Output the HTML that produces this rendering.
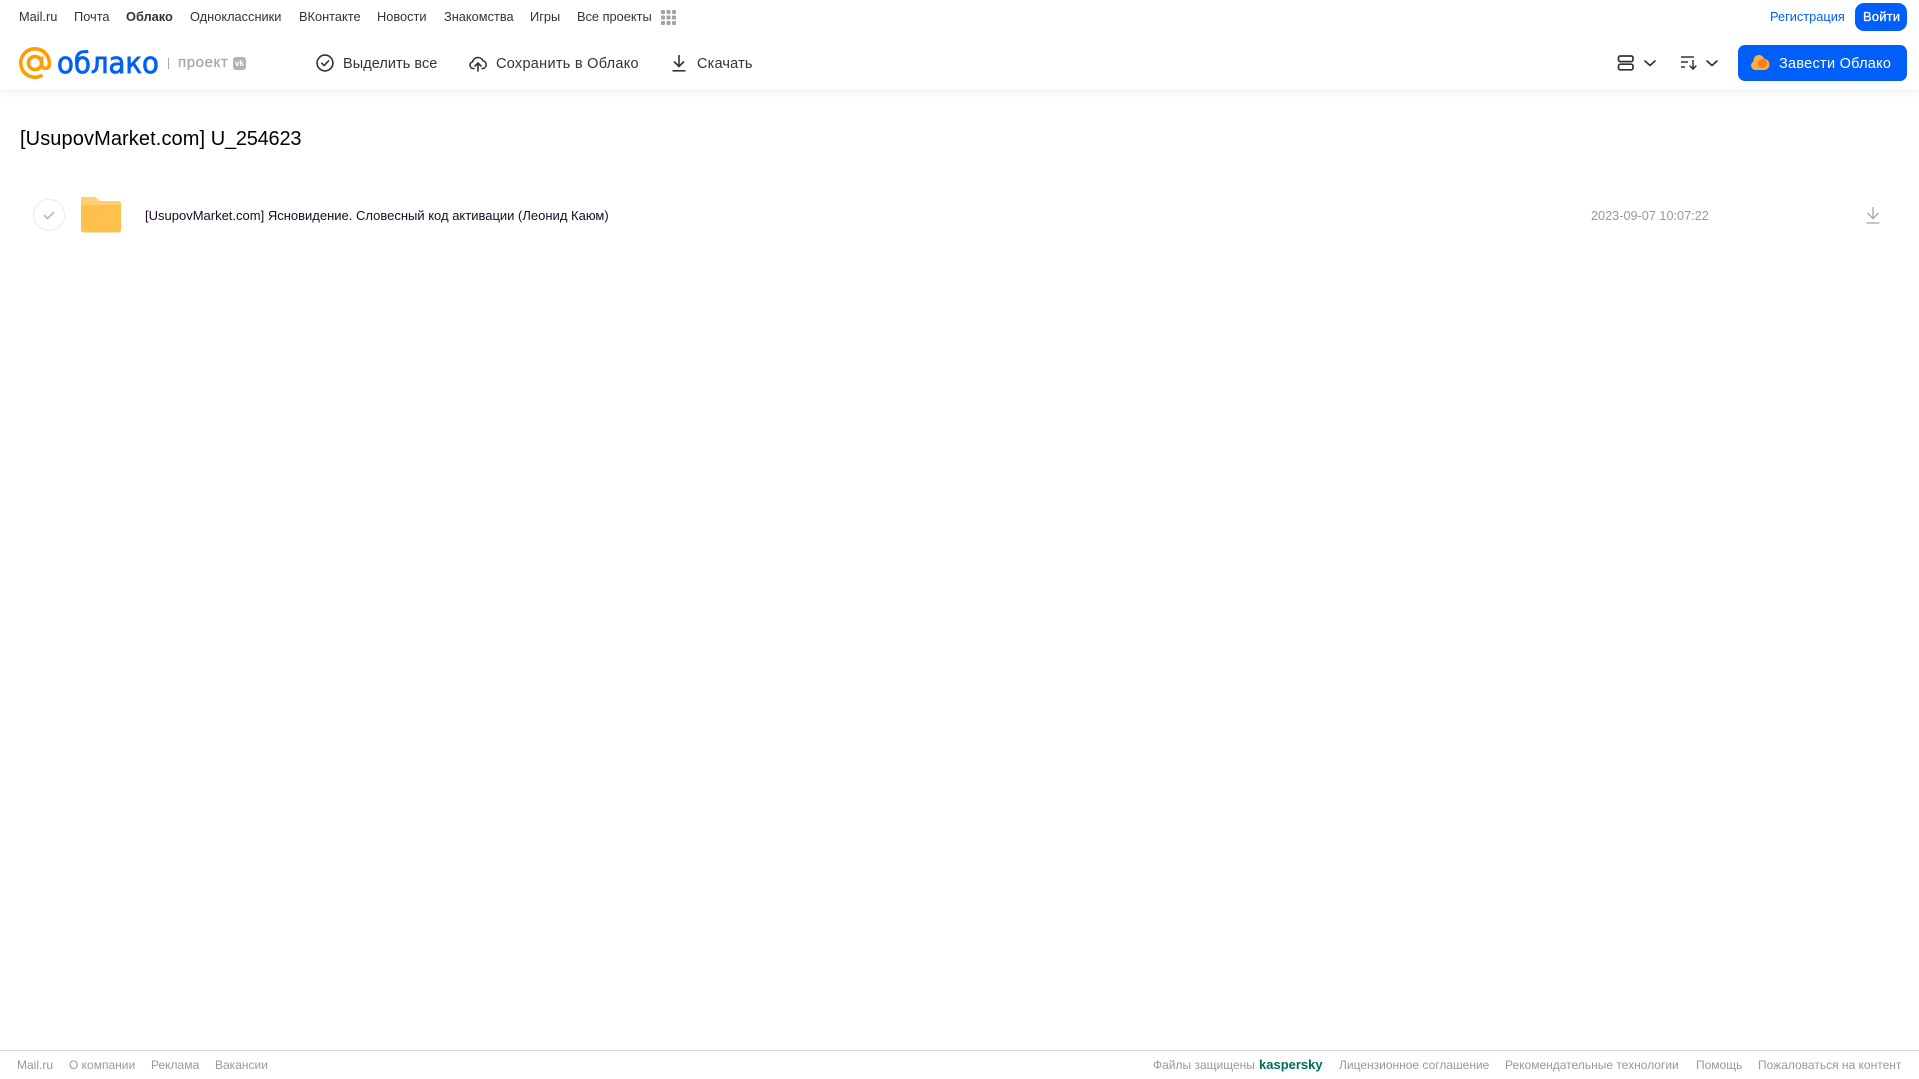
<!DOCTYPE html>
<html lang="ru"><head><meta charset="utf-8"><title>Облако</title>
<style>
html,body{margin:0;padding:0;background:#fff;width:1919px;height:1079px;overflow:hidden}
body{font-family:"Liberation Sans",Arial,sans-serif;position:relative}
.t{position:absolute;white-space:nowrap;line-height:20px;height:20px}
.n{font-size:12.8px;color:#333;top:7px}
.b{font-size:14.5px;color:#333;top:54px}
.f{font-size:12px;color:#999;top:1055px}
svg{position:absolute;overflow:visible}
</style></head><body>
<div style="position:absolute;left:0;top:0;width:1919px;height:90px;background:#fff;box-shadow:0 2px 8px rgba(0,0,0,.07)"></div>

<div class="t n" style="left:19px">Mail.ru</div>
<div class="t n" style="left:74px">Почта</div>
<div class="t n" style="left:126px;font-weight:bold">Облако</div>
<div class="t n" style="left:190px">Одноклассники</div>
<div class="t n" style="left:299px">ВКонтакте</div>
<div class="t n" style="left:377px">Новости</div>
<div class="t n" style="left:444px">Знакомства</div>
<div class="t n" style="left:530px">Игры</div>
<div class="t n" style="left:577px">Все проекты</div>
<svg style="left:661px;top:10px" width="15" height="15" fill="#a3a3a3"><rect width="4" height="4" rx="1"/><rect x="5.5" width="4" height="4" rx="1"/><rect x="11" width="4" height="4" rx="1"/><rect y="5.500" width="4" height="4" rx="1"/><rect x="5.500" y="5.500" width="4" height="4" rx="1"/><rect x="11" y="5.500" width="4" height="4" rx="1"/><rect y="11" width="4" height="4" rx="1"/><rect x="5.500" y="11" width="4" height="4" rx="1"/><rect x="11" y="11" width="4" height="4" rx="1"/></svg>

<div class="t n" style="left:1770px;color:#005ff9">Регистрация</div>
<div style="position:absolute;left:1855px;top:3px;width:52px;height:28px;border-radius:9px;background:#005ff9"></div>
<div class="t n" style="left:1863px;color:#fff;top:7px;font-size:13px;letter-spacing:.15px;-webkit-text-stroke:.3px #fff">Войти</div>

<svg style="left:19px;top:47px" width="32" height="32" viewBox="0 0 32 32" fill="none" stroke="#ff9e00" stroke-width="3.6"><circle cx="16" cy="16" r="6.600"/><path d="M22.600 9.500V17.500a3.900 3.900 0 0 0 7.600 1.200C31.500 10 25 1.800 16 1.800A14.200 14.200 0 1 0 23.500 28"/></svg>
<div class="t" style="left:57px;top:45px;height:36px;line-height:36px;font-size:29px;color:#005ff9;-webkit-text-stroke:.8px #005ff9;font-family:'DejaVu Sans',sans-serif;transform-origin:0 50%;transform:scaleX(.95)">облако</div>
<div style="position:absolute;left:168px;top:58px;width:1px;height:11px;background:#aaa"></div>
<div class="t" style="left:178px;top:53px;font-size:15px;color:#a6a6a6;letter-spacing:.6px;-webkit-text-stroke:.3px #a6a6a6">проект</div>
<div style="position:absolute;left:233px;top:57px;width:13px;height:13px;border-radius:3px;background:#b3b3b3;color:#fff;font:bold 8px/13px 'Liberation Sans',sans-serif;text-align:center">vk</div>

<svg style="left:316px;top:54px" width="18" height="18" fill="none" stroke="#333" stroke-width="1.6"><circle cx="9" cy="9" r="7.900"/><path d="M5.700 9.200l2.400 2.400 4.400-4.700" stroke-linecap="round" stroke-linejoin="round"/></svg>
<div class="t b" style="left:343px;letter-spacing:.05px">Выделить все</div>
<svg style="left:469px;top:55px" width="18" height="17" viewBox="0 0 18 17" fill="none" stroke="#333" stroke-width="1.6" stroke-linecap="round" stroke-linejoin="round"><path d="M5 13.500H4.200A3.400 3.400 0 0 1 3.600 6.800 5.500 5.500 0 0 1 14 5.800 3.900 3.900 0 0 1 13.800 13.500H13"/><path d="M9 16V8.500M6 11l3-3 3 3"/></svg>
<div class="t b" style="left:496px;letter-spacing:.28px">Сохранить в Облако</div>
<svg style="left:671px;top:54px" width="16" height="18" fill="none" stroke="#333" stroke-width="1.6"><path d="M8 1v11M3 7.500l5 5 5-5"/><path d="M1.500 16.800h13"/></svg>
<div class="t b" style="left:697px;letter-spacing:.18px">Скачать</div>

<svg style="left:1617px;top:55px" width="18" height="16" fill="none" stroke="#333" stroke-width="1.7"><rect x="1.500" y="1" width="14.500" height="5.600" rx="1.800"/><rect x="1.500" y="9.200" width="14.500" height="5.600" rx="1.800"/></svg>
<svg style="left:1644px;top:60px" width="12" height="7" fill="none" stroke="#333" stroke-width="1.7" stroke-linecap="round" stroke-linejoin="round"><path d="M1 1l5 4.500L11 1"/></svg>
<svg style="left:1681px;top:55px" width="17" height="16" fill="none" stroke="#333" stroke-width="1.500"><path d="M0 2h13M0 7h7M0 12h4"/><path d="M12 5v9M8.700 10.600l3.300 3.400 3.300-3.400"/></svg>
<svg style="left:1706px;top:60px" width="12" height="7" fill="none" stroke="#333" stroke-width="1.7" stroke-linecap="round" stroke-linejoin="round"><path d="M1 1l5 4.500L11 1"/></svg>

<div style="position:absolute;left:1738px;top:45px;width:169px;height:36px;border-radius:7px;background:#005ff9"></div>
<svg style="left:1751px;top:55px" width="19" height="16" fill="#ffb040"><circle cx="8" cy="5.500" r="5.500"/><circle cx="4.500" cy="10.500" r="4.500"/><circle cx="13" cy="9.500" r="5.500"/><rect x="4" y="8" width="10" height="7"/><circle cx="11.500" cy="8.500" r="4.600" fill="#ff7a1f"/></svg>
<div class="t b" style="left:1779px;color:#fff;letter-spacing:.27px">Завести Облако</div>

<div class="t" style="left:20px;top:126px;height:26px;line-height:26px;font-size:20px;color:#000"><span style="letter-spacing:.1px">[UsupovMarket.com]</span> <span style="letter-spacing:-.23px">U_254623</span></div>

<div style="position:absolute;left:33px;top:199px;width:30px;height:30px;border:1px solid #ececec;border-radius:50%"></div>
<svg style="left:43px;top:211px" width="12" height="9" fill="none" stroke="#aaa" stroke-width="1.400"><path d="M1.500 4.500l3 3 6-6" stroke-linecap="round"/></svg>
<svg style="left:81px;top:197px" width="40" height="36"><path d="M2 0H13c3 0 4 4 7 4H38a2 2 0 0 1 2 2V8H0V2A2 2 0 0 1 2 0Z" fill="#ffd072"/><path d="M0 8H40V33a2.500 2.500 0 0 1-2.500 2.500H2.500A2.500 2.500 0 0 1 0 33Z" fill="#ffc04e"/></svg>
<div class="t" style="left:145px;top:206px;font-size:13px;color:#1a0a24">[UsupovMarket.com] Ясновидение. Словесный код активации (Леонид Каюм)</div>
<div class="t" style="left:1591px;top:206px;font-size:12.7px;color:#999">2023-09-07 10:07:22</div>
<svg style="left:1866px;top:206px" width="14" height="18" fill="none" stroke="#a6a6a6" stroke-width="1.300"><path d="M7 1v11.500M1.500 7l5.500 5.500L12.500 7"/><path d="M.5 17h13"/></svg>

<div style="position:absolute;left:0;top:1050px;width:1919px;height:1px;background:#d9d9d9"></div>
<div class="t f" style="left:17px">Mail.ru</div>
<div class="t f" style="left:69px">О компании</div>
<div class="t f" style="left:151px">Реклама</div>
<div class="t f" style="left:215px">Вакансии</div>
<div class="t f" style="left:1153px">Файлы защищены</div>
<div class="t f" style="left:1259px;font-size:13px;font-weight:bold;color:#006d5c">kaspersky</div>
<div class="t f" style="left:1339px">Лицензионное соглашение</div>
<div class="t f" style="left:1505px">Рекомендательные технологии</div>
<div class="t f" style="left:1696px">Помощь</div>
<div class="t f" style="left:1758px">Пожаловаться на контент</div>
</body></html>
